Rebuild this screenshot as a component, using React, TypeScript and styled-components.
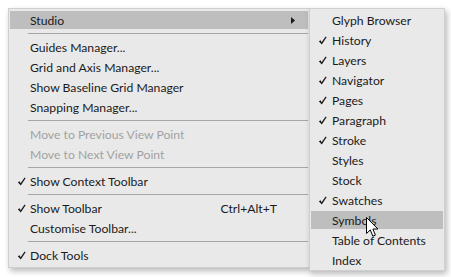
import React from 'react';
import styled, { createGlobalStyle } from 'styled-components';

const GlobalStyle = createGlobalStyle`
  html, body {
    margin: 0;
    padding: 0;
    background: #ffffff;
  }
  body {
    font-family: Lato, "Open Sans", sans-serif;
    font-size: 12.2px;
    color: #1b1b1b;
  }
`;

const Stage = styled.div`
  display: flex;
  align-items: flex-start;
  padding: 8px 0 0 8px;
  width: 451px;
  height: 277px;
  box-sizing: border-box;
  overflow: hidden;
`;

const Panel = styled.div<{ $width: number }>`
  position: relative;
  width: ${(p) => p.$width}px;
  box-sizing: border-box;
  background: #e9e9e9;
  border: 1px solid #cfcfcf;
  padding: 1px 1px 2px 1px;
  box-shadow: 2px 3px 6px rgba(0, 0, 0, 0.28);
  display: flex;
  flex-direction: column;
`;

const SubPanel = styled(Panel)`
  margin-left: -1px;
  padding-bottom: 0;
`;

const Row = styled.div<{ $active?: boolean; $disabled?: boolean; $indent: number }>`
  position: relative;
  height: 20px;
  display: flex;
  align-items: center;
  padding-left: ${(p) => p.$indent}px;
  padding-right: 14px;
  color: ${(p) => (p.$disabled ? '#a2a2a2' : '#1b1b1b')};
  white-space: nowrap;

  &::before {
    content: '';
    position: absolute;
    left: 0;
    right: 0;
    top: 1px;
    bottom: 1px;
    background: ${(p) => (p.$active ? '#bebebe' : 'transparent')};
  }
`;

const Label = styled.span`
  position: relative;
  flex: 1;
`;

const Shortcut = styled.span`
  position: relative;
  margin-right: 17px;
`;

const Check = styled.svg<{ $left: number }>`
  position: absolute;
  left: ${(p) => p.$left}px;
  top: 6px;
`;

const Arrow = styled.svg`
  position: relative;
  margin-right: -1px;
`;

const Separator = styled.div`
  height: 1px;
  margin: 3px 0 3px 18px;
  background: #a6a6a6;
`;

const Cursor = styled.svg`
  position: absolute;
  left: 56px;
  top: 208px;
`;

const CheckMark = ({ left }: { left: number }) => (
  <Check $left={left} width="9" height="9" viewBox="0 0 9 9">
    <path d="M0.8 5.2 L2.6 4.2 L3.6 6.3 L7.6 0.6 L8.6 1.3 L3.8 8.6 Z" fill="#1b1b1b" />
  </Check>
);

type Item =
  | { sep: true }
  | { label: string; checked?: boolean; disabled?: boolean; active?: boolean; shortcut?: string; sub?: boolean };

const mainItems: Item[] = [
  { label: 'Studio', active: true, sub: true },
  { sep: true },
  { label: 'Guides Manager...' },
  { label: 'Grid and Axis Manager...' },
  { label: 'Show Baseline Grid Manager' },
  { label: 'Snapping Manager...' },
  { sep: true },
  { label: 'Move to Previous View Point', disabled: true },
  { label: 'Move to Next View Point', disabled: true },
  { sep: true },
  { label: 'Show Context Toolbar', checked: true },
  { sep: true },
  { label: 'Show Toolbar', checked: true, shortcut: 'Ctrl+Alt+T' },
  { label: 'Customise Toolbar...' },
  { sep: true },
  { label: 'Dock Tools', checked: true },
];

const subItems: Item[] = [
  { label: 'Glyph Browser' },
  { label: 'History', checked: true },
  { label: 'Layers', checked: true },
  { label: 'Navigator', checked: true },
  { label: 'Pages', checked: true },
  { label: 'Paragraph', checked: true },
  { label: 'Stroke', checked: true },
  { label: 'Styles' },
  { label: 'Stock' },
  { label: 'Swatches', checked: true },
  { label: 'Symbols', active: true },
  { label: 'Table of Contents' },
  { label: 'Index' },
];

const renderItems = (items: Item[], indent: number, checkLeft: number) =>
  items.map((it, i) =>
    'sep' in it ? (
      <Separator key={i} />
    ) : (
      <Row key={i} $indent={indent} $active={it.active} $disabled={it.disabled}>
        {it.checked && <CheckMark left={checkLeft} />}
        <Label>{it.label}</Label>
        {it.shortcut && <Shortcut>{it.shortcut}</Shortcut>}
        {it.sub && (
          <Arrow width="4" height="7" viewBox="0 0 4 7">
            <path d="M0 0 L4 3.5 L0 7 Z" fill="#1b1b1b" />
          </Arrow>
        )}
      </Row>
    )
  );

const App: React.FC = () => {
  return (
    <>
      <GlobalStyle />
      <Stage>
        <Panel $width={302}>{renderItems(mainItems, 20, 7)}</Panel>
        <SubPanel $width={136}>
          {renderItems(subItems, 21, 7)}
          <Cursor width="13" height="21" viewBox="0 0 13 21">
            <path
              d="M0.5 0.5 L0.5 16.5 L4.3 12.9 L6.8 19.2 L9.4 18.1 L6.9 12 L11.9 12 Z"
              fill="#ffffff"
              stroke="#000000"
              strokeWidth="1"
              strokeLinejoin="round"
            />
          </Cursor>
        </SubPanel>
      </Stage>
    </>
  );
};

export default App;
